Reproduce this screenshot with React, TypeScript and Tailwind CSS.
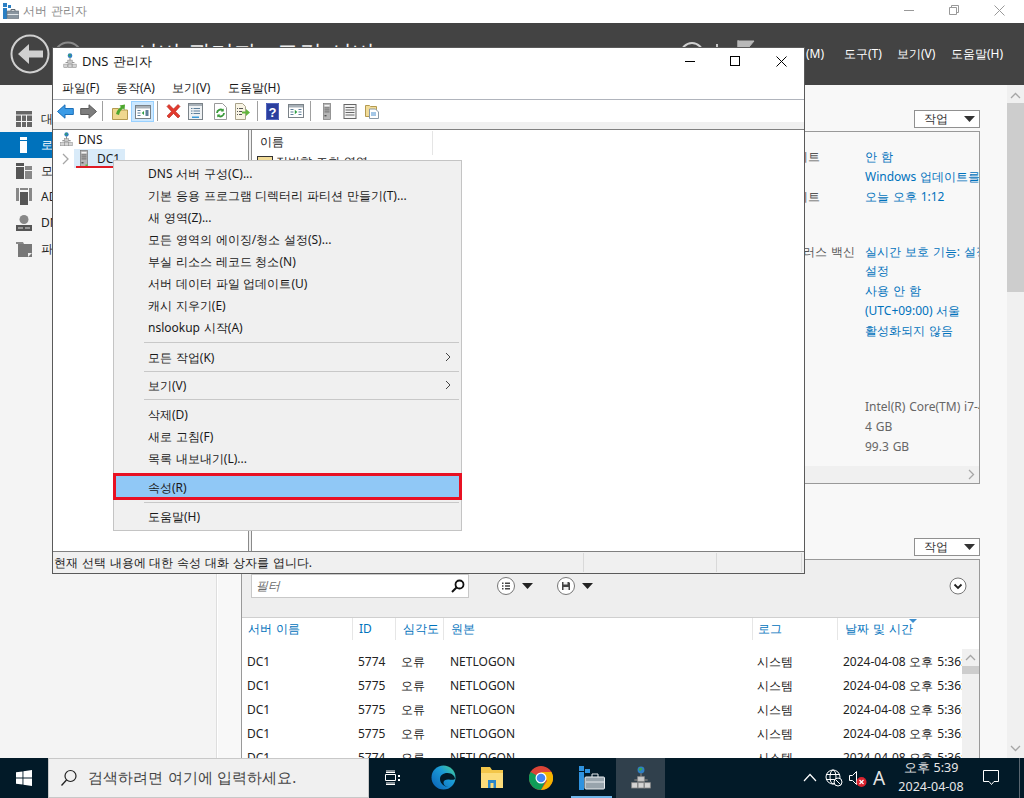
import React from "react";

const DnsIcon = ({ size = 16, className = "" }: { size?: number; className?: string }) => (
  <svg width={size} height={size} viewBox="0 0 16 18" className={className}>
    <circle cx="8" cy="3" r="2.6" fill="#2f7fc4" />
    <path d="M6.2 2.2c1-1.2 2.4-1 3 0-.6 1-1.4.6-1.6 1.6-.6.2-1.2-.6-1.4-1.6z" fill="#3aa655" />
    <path d="M7.5 5.5h1v3h-1zM3 10h10v1H3z" fill="#777" />
    <rect x="5.5" y="8" width="5" height="3.5" fill="#c9c9c9" stroke="#8a8a8a" strokeWidth=".6" />
    <rect x="1" y="12.5" width="4.4" height="4" fill="#d4d4d4" stroke="#8a8a8a" strokeWidth=".6" />
    <rect x="5.8" y="12.5" width="4.4" height="4" fill="#d4d4d4" stroke="#8a8a8a" strokeWidth=".6" />
    <rect x="10.6" y="12.5" width="4.4" height="4" fill="#d4d4d4" stroke="#8a8a8a" strokeWidth=".6" />
  </svg>
);

const ServerIcon = ({ dot = false }: { dot?: boolean }) => (
  <svg width="8" height="17" viewBox="0 0 8 17">
    <rect x=".5" y=".5" width="7" height="16" fill="#b5b5b5" stroke="#777" strokeWidth=".7" />
    <rect x="1.500" y="2" width="5" height="1.400" fill="#f2f2f2" />
    <rect x="1.500" y="4.400" width="5" height="1" fill="#6e6e6e" />
    <rect x="1.500" y="6.400" width="5" height="1" fill="#6e6e6e" />
    <rect x="1.500" y="8.400" width="5" height="1" fill="#6e6e6e" />
    <rect x="1.500" y="12" width="2" height="1.400" fill="#555" />
    {dot && <rect x="5.500" y="14.500" width="2" height="2" fill="#56c13a" />}
  </svg>
);

const WinPanel = ({ children }: { children: React.ReactNode }) => (
  <svg width="16" height="14" viewBox="0 0 16 14">
    <rect x=".5" y=".5" width="15" height="13" fill="#fff" stroke="#7a8288" />
    <rect x="1" y="1" width="14" height="2.5" fill="#a7b0b7" />
    {children}
  </svg>
);

const Toolbar = () => (
  <div className="absolute left-0 top-[53px] w-full h-[22px]">
    <svg className="absolute left-[5px] top-[4px]" width="17" height="15" viewBox="0 0 17 15">
      <path d="M0.5 7.5 8 .8v3.7h8.3v6H8v3.7z" fill="#3b9be6" stroke="#1c6fb8" />
    </svg>
    <svg className="absolute left-[28px] top-[4px]" width="17" height="15" viewBox="0 0 17 15">
      <path d="M16.5 7.5 9 .8v3.700H.7v6H9v3.700z" fill="#7d7d7d" stroke="#5c5c5c" />
    </svg>
    <div className="absolute left-[50px] top-[1px] w-px h-[20px] bg-[#a0a0a0]" />
    <svg className="absolute left-[60px] top-[3px]" width="16" height="17" viewBox="0 0 16 17">
      <path d="M.5 5.500h6l1 1.500h8v9.500H.5z" fill="#efd78e" stroke="#b49a50" />
      <path d="M4 11 C5 7 7 5 9 4 L7.500 2.500 13 1.500 12.500 7 11 5.500C9 7 7.500 9 7 12z" fill="#4ea72e" />
    </svg>
    <div className="absolute left-[79px] top-[1px] w-[23px] h-[21px] bg-[#cce8ff] border border-[#99d1ff] flex items-center justify-center">
      <WinPanel>
        <path d="M2.500 5h3v1h-3zM2.500 7.500h3v1h-3zM2.500 10h3v1h-3zM10.500 5h3v6h-3z" fill="#5e7f9a" />
        <path d="M9 6v4L6.700 8z" fill="#2f9e44" />
      </WinPanel>
    </div>
    <div className="absolute left-[105px] top-[1px] w-px h-[20px] bg-[#a0a0a0]" />
    <svg className="absolute left-[113px] top-[3px]" width="17" height="17" viewBox="0 0 17 17">
      <path d="M2 3.500 4 1.500l4.500 4.500 4.500-4.500 2 2-4.500 4.900 4.500 4.600-2 2-4.500-4.600-4.500 4.600-2-2L6.500 8.400z" fill="#e23a2e" stroke="#b32318" strokeWidth=".6" />
    </svg>
    <svg className="absolute left-[136px] top-[3px]" width="15" height="17" viewBox="0 0 15 17">
      <rect x=".5" y=".5" width="14" height="16" fill="#eef1f3" stroke="#7a8288" />
      <rect x="1" y="1" width="13" height="2" fill="#a7b0b7" />
      <path d="M3 5h1.500v1H3zM5.500 5H12v1H5.500zM3 7.500h1.500v1H3zM5.500 7.500H12v1H5.500zM3 10h1.500v1H3zM5.500 10H12v1H5.500z" fill="#5e7f9a" />
      <rect x="4" y="13.500" width="7" height="1.500" fill="#3a9ad9" />
    </svg>
    <svg className="absolute left-[161px] top-[3px]" width="15" height="17" viewBox="0 0 15 17">
      <path d="M1.500.5h8l4 4v12h-12z" fill="#fff" stroke="#9a9a9a" />
      <path d="M4 10a3.500 3.500 0 0 1 6-2.400M11 10a3.500 3.500 0 0 1-6 2.400" fill="none" stroke="#3a9a3a" strokeWidth="1.800" />
      <path d="M10.700 5.500v3h-3zM4.300 14.500v-3h3z" fill="#3a9a3a" />
    </svg>
    <svg className="absolute left-[182px] top-[3px]" width="16" height="17" viewBox="0 0 16 17">
      <path d="M1.500.5h7l3 3v13h-10z" fill="#f8f4e4" stroke="#a8a28a" />
      <path d="M3 5h1v1H3zM5 5h4v1H5zM3 8h1v1H3zM5 8h3v1H5zM3 11h1v1H3zM5 11h3v1H5z" fill="#555" />
      <path d="M8 8.500h4V6l4 3.500-4 3.500v-2.500H8z" fill="#62b53c" />
    </svg>
    <div className="absolute left-[205px] top-[1px] w-px h-[20px] bg-[#a0a0a0]" />
    <svg className="absolute left-[214px] top-[3px]" width="13" height="17" viewBox="0 0 13 17">
      <rect width="13" height="17" fill="#2b3f9e" />
      <rect x=".7" y=".7" width="11.600" height="15.600" fill="none" stroke="#6f82d6" strokeWidth=".6" />
      <text x="6.500" y="13.500" textAnchor="middle" fill="#fff" fontSize="13" fontWeight="700" fontFamily="'Liberation Sans',sans-serif">?</text>
    </svg>
    <div className="absolute left-[236px] top-[4px]">
      <WinPanel>
        <path d="M2.500 5h3v1h-3zM2.500 7.500h3v1h-3zM2.500 10h3v1h-3zM10.500 5h3v1h-3zM10.500 7.500h3v1h-3zM10.500 10h3v1h-3z" fill="#5e7f9a" />
        <path d="M6.800 5.800v4.400L9.300 8z" fill="#2f9e44" />
      </WinPanel>
    </div>
    <div className="absolute left-[258px] top-[1px] w-px h-[20px] bg-[#a0a0a0]" />
    <div className="absolute left-[271px] top-[3px]"><ServerIcon /></div>
    <svg className="absolute left-[291px] top-[4px]" width="14" height="15" viewBox="0 0 14 15">
      <rect x="1" y=".5" width="12" height="14" fill="#f4f4f4" stroke="#666" />
      <path d="M2.500 3h9v1h-9zM2.500 5.500h9v1h-9zM2.500 8h9v1h-9zM2.500 10.500h9v1h-9z" fill="#666" />
    </svg>
    <svg className="absolute left-[313px] top-[3px]" width="15" height="16" viewBox="0 0 15 16">
      <path d="M.5 2.500h4l1 1h6v10H.5z" fill="#f2dc98" stroke="#b49a50" />
      <path d="M4.500 6h6l3 3v6.500h-9z" fill="#fff" stroke="#8a9aa8" />
      <path d="M6 9.500h5v1H6zM6 11.500h5v1H6z" fill="#4a90d0" />
    </svg>
  </div>
);

const menuTop = [
  "DNS 서버 구성(C)...",
  "기본 응용 프로그램 디렉터리 파티션 만들기(T)...",
  "새 영역(Z)...",
  "모든 영역의 에이징/청소 설정(S)...",
  "부실 리소스 레코드 청소(N)",
  "서버 데이터 파일 업데이트(U)",
  "캐시 지우기(E)",
  "nslookup 시작(A)",
];

const MenuItem = ({ label, arrow }: { label: string; arrow?: boolean }) => (
  <div className="relative h-[22px] leading-[24px] pl-[34px] whitespace-nowrap">
    {label}
    {arrow && (
      <svg className="absolute right-[9px] top-[6px]" width="8" height="10" viewBox="0 0 8 10">
        <path d="M2 1l4 4-4 4" fill="none" stroke="#444" strokeWidth="1" />
      </svg>
    )}
  </div>
);

const Sep = ({ h, mt }: { h: string; mt: string }) => (
  <div className={h + " relative"}>
    <div className={mt + " absolute left-[30px] right-[2px] h-px bg-[#c8c8c8]"} />
  </div>
);

const ContextMenu = () => (
  <div className="absolute left-[61px] top-[113px] w-[349px] h-[371px] bg-[#f0f0f0] border border-[#c4c4c4] pt-[1px] text-[12px] text-[#1a1a1a]">
    {menuTop.map((m) => (
      <MenuItem key={m} label={m} />
    ))}
    <Sep h="h-[8px]" mt="top-[4px]" />
    <MenuItem label="모든 작업(K)" arrow />
    <Sep h="h-[6px]" mt="top-[3px]" />
    <MenuItem label="보기(V)" arrow />
    <Sep h="h-[7px]" mt="top-[3px]" />
    <MenuItem label="삭제(D)" />
    <MenuItem label="새로 고침(F)" />
    <MenuItem label="목록 내보내기(L)..." />
    <div className="h-[4px]" />
    <div className="relative -mx-px h-[27px] bg-[#90c8f6] border-[3px] border-[#e81123] leading-[24px] pl-[32px]">
      속성(R)
    </div>
    <Sep h="h-[5px]" mt="top-[2px]" />
    <MenuItem label="도움말(H)" />
  </div>
);

const DnsWindow = () => (
  <div className="absolute left-[52px] top-[47px] w-[753px] h-[527px] bg-white text-[12px] text-[#1a1a1a]">
    <div className="absolute left-[10px] top-[6px]"><DnsIcon /></div>
    <div className="absolute left-[30px] top-[5px] text-[13px] leading-[18px]">DNS 관리자</div>
    <svg className="absolute left-[633px] top-[9px]" width="10" height="10" viewBox="0 0 10 10"><path d="M0 5.500h10" stroke="#000" /></svg>
    <svg className="absolute left-[678px] top-[9px]" width="10" height="10" viewBox="0 0 10 10"><rect x=".5" y=".5" width="9" height="9" fill="none" stroke="#000" /></svg>
    <svg className="absolute left-[724px] top-[9px]" width="11" height="11" viewBox="0 0 11 11"><path d="M.5.500l10 10M10.500.500l-10 10" stroke="#000" /></svg>
    <div className="absolute left-[10px] top-[32px] leading-[18px]">파일(F)</div>
    <div className="absolute left-[64px] top-[32px] leading-[18px]">동작(A)</div>
    <div className="absolute left-[120px] top-[32px] leading-[18px]">보기(V)</div>
    <div className="absolute left-[176px] top-[32px] leading-[18px]">도움말(H)</div>
    <div className="absolute left-0 top-[52px] w-full h-px bg-[#b0b4bc]" />
    <Toolbar />
    <div className="absolute left-0 top-[75px] w-full h-[7px] bg-[#f0f0f0]" />
    <div className="absolute left-0 top-[82px] w-full h-px bg-[#808080]" />
    <div className="absolute left-0 top-[83px] w-[196px] h-[421px] bg-white">
      <div className="absolute left-[7px] top-[2px]"><DnsIcon size={15} /></div>
      <div className="absolute left-[26px] top-[1px] leading-[18px]">DNS</div>
      <svg className="absolute left-[9px] top-[23px]" width="8" height="12" viewBox="0 0 8 12"><path d="M2 1l5 5-5 5" fill="none" stroke="#a6a6a6" strokeWidth="1.300" /></svg>
      <div className="absolute left-[22px] top-[19px] w-[51px] h-[19px] bg-[#d9ebf9]" />
      <div className="absolute left-[28px] top-[20px]"><ServerIcon dot /></div>
      <div className="absolute left-[45px] top-[20px] leading-[18px]">DC1</div>
      <div className="absolute left-[24px] top-[36px] w-[48px] h-[2px] bg-[#e01b24]" />
    </div>
    <div className="absolute left-[196px] top-[83px] w-[4px] h-[421px] bg-[#f0f0f0] border-x border-[#8a8a8a]" />
    <div className="absolute left-[200px] top-[83px] right-0 h-[421px] bg-white">
      <div className="absolute left-[8px] top-[3px] leading-[18px]">이름</div>
      <div className="absolute left-[180px] top-[1px] w-px h-[24px] bg-[#e5e5e5]" />
      <svg className="absolute left-[5px] top-[26px]" width="16" height="14" viewBox="0 0 16 14">
        <rect x=".5" y=".5" width="15" height="13" fill="#f2dc98" stroke="#333" />
      </svg>
      <div className="absolute left-[24px] top-[23px] leading-[18px]">정방향 조회 영역</div>
    </div>
    <div className="absolute left-0 top-[504px] w-full h-[22px] bg-[#f0f0f0] border-t border-[#808080] leading-[21px] pl-[2px]">
      현재 선택 내용에 대한 속성 대화 상자를 엽니다.
      <div className="absolute left-[531px] top-[1px] w-px h-[19px] bg-[#d9d9d9]" />
      <div className="absolute left-[664px] top-[1px] w-px h-[19px] bg-[#d9d9d9]" />
      <div className="absolute left-[749px] top-[1px] w-px h-[19px] bg-[#d9d9d9]" />
    </div>
    <div className="absolute inset-0 border border-[#5a5a5a] pointer-events-none" />
    <ContextMenu />
  </div>
);

const rows = [["5774"], ["5775"], ["5775"], ["5775"], ["5774"]];

const DropButton = ({ top }: { top: string }) => (
  <div className={top + " absolute left-[914px] w-[66px] h-[18px] bg-white border border-[#909090] text-[12px] text-[#333] leading-[16px] pl-[9px]"}>
    작업
    <svg className="absolute left-[49px] top-[5px]" width="11" height="6" viewBox="0 0 11 6"><path d="M0 0h11L5.500 6z" fill="#333" /></svg>
  </div>
);

const Background = () => (
  <>
    <div className="absolute left-0 top-0 w-full h-[23px] bg-white">
      <svg className="absolute left-[3px] top-[3px]" width="16" height="16" viewBox="0 0 16 16">
        <path d="M0 0h4v4H0zM0 5h4v11H0zM5 2h3v3H5z" fill="#2a7fc4" />
        <rect x="4" y="8" width="12" height="7.500" rx=".5" fill="#8a96a0" stroke="#5f6a73" strokeWidth=".6" />
        <path d="M8 8V6.500h4V8" fill="none" stroke="#5f6a73" />
        <path d="M4.500 11.500h11" stroke="#e4e8eb" />
      </svg>
      <div className="absolute left-[23px] top-[2px] text-[12px] leading-[18px] text-[#8a8a8a]">서버 관리자</div>
      <svg className="absolute left-[904px] top-[10px]" width="10" height="2" viewBox="0 0 10 2"><path d="M0 .5h10" stroke="#999" /></svg>
      <svg className="absolute left-[949px] top-[5px]" width="10" height="10" viewBox="0 0 10 10"><path d="M.5 2.500h7v7h-7zM2.500 2.500v-2h7v7h-2" fill="none" stroke="#999" /></svg>
      <svg className="absolute left-[994px] top-[5px]" width="11" height="11" viewBox="0 0 11 11"><path d="M.5.500l10 10M10.500.500l-10 10" stroke="#999" /></svg>
    </div>
    <div className="absolute left-0 top-[23px] w-full h-[62px] bg-[#434343] text-white">
      <svg className="absolute left-[10px] top-[11px]" width="40" height="40" viewBox="0 0 40 40">
        <circle cx="20" cy="20" r="18.500" fill="none" stroke="#d0d0d0" strokeWidth="2" />
        <path d="M8 20 19 10v6.500h14v7H19V30z" fill="#d0d0d0" />
      </svg>
      <svg className="absolute left-[53px] top-[18px]" width="30" height="30" viewBox="0 0 30 30">
        <circle cx="15" cy="15" r="13.500" fill="none" stroke="#8a8a8a" strokeWidth="2" />
      </svg>
      <div className="absolute left-[135px] top-[14px] text-[23px] leading-[30px] text-[#f0f0f0] whitespace-nowrap">서버 관리자 · 로컬 서버</div>
      <svg className="absolute left-[679px] top-[18px]" width="26" height="26" viewBox="0 0 26 26">
        <circle cx="13" cy="13" r="11" fill="none" stroke="#d0d0d0" strokeWidth="2" />
      </svg>
      <div className="absolute left-[716px] top-[21px] w-[2px] h-[4px] bg-[#c8c8c8]" />
      <svg className="absolute left-[737px] top-[17px]" width="18" height="20" viewBox="0 0 18 20">
        <path d="M1 0v20M1 1h16l-5 6 5 6H1z" fill="#b8b8b8" stroke="#b8b8b8" />
      </svg>
      <div className="absolute right-[200px] top-[22px] text-[12px] leading-[18px] whitespace-nowrap">관리(M)</div>
      <div className="absolute left-[844px] top-[22px] text-[12px] leading-[18px] whitespace-nowrap">도구(T)</div>
      <div className="absolute left-[897px] top-[22px] text-[12px] leading-[18px] whitespace-nowrap">보기(V)</div>
      <div className="absolute left-[951px] top-[22px] text-[12px] leading-[18px] whitespace-nowrap">도움말(H)</div>
    </div>
    <div className="absolute left-0 top-[85px] w-[217px] h-[673px] bg-[#f4f4f4] border-r border-[#dedede] text-[12px] text-[#222]">
      <svg className="absolute left-[16px] top-[26px]" width="16" height="16" viewBox="0 0 16 16">
        <path d="M0 0h16v3.500H0zM0 4.500h5V10H0zM6 4.500h4V10H6zM11 4.500h5V10h-5zM0 11h5v5H0zM6 11h4v5H6zM11 11h5v5h-5z" fill="#666" />
      </svg>
      <div className="absolute left-[41px] top-[25px] leading-[18px]">대시보드</div>
      <div className="absolute left-0 top-[47px] w-full h-[26px] bg-[#0072bc]" />
      <svg className="absolute left-[20px] top-[52px]" width="7" height="16" viewBox="0 0 7 16">
        <path d="M0 0h7v3H0zM0 4h7v12H0z" fill="#fff" />
      </svg>
      <div className="absolute left-[41px] top-[51px] leading-[18px] text-white">로컬 서버</div>
      <svg className="absolute left-[16px] top-[78px]" width="16" height="16" viewBox="0 0 16 16">
        <path d="M0 0h8v3H0zM0 4h8v12H0z" fill="#555" />
        <path d="M9 3h7v4H9zM9 8h7v8H9z" fill="#888" />
      </svg>
      <div className="absolute left-[41px] top-[77px] leading-[18px]">모든 서버</div>
      <svg className="absolute left-[16px] top-[103px]" width="16" height="17" viewBox="0 0 16 17">
        <path d="M0 0h3v13H0zM13 0h3v13h-3zM4 0h8v2H4z" fill="#888" />
        <path d="M4 4h8v13H4z" fill="#555" />
      </svg>
      <div className="absolute left-[41px] top-[103px] leading-[18px]">AD DS</div>
      <svg className="absolute left-[16px] top-[130px]" width="16" height="16" viewBox="0 0 16 16">
        <circle cx="8" cy="4.500" r="4.500" fill="#888" />
        <path d="M0 10h16v6H0z" fill="#555" />
        <path d="M2 12.500h5v1H2zM9 12.500h5v1H9z" fill="#ddd" />
      </svg>
      <div className="absolute left-[41px] top-[129px] leading-[18px]">DNS</div>
      <svg className="absolute left-[16px] top-[156px]" width="16" height="16" viewBox="0 0 16 16">
        <path d="M0 1h7l1 2H0z" fill="#888" />
        <path d="M2 3h14v13H2z" fill="#777" />
        <path d="M12 12h4l-4 4z" fill="#eee" />
      </svg>
      <div className="absolute left-[41px] top-[155px] leading-[18px]">파일 및 저장소 서비스</div>
    </div>
    <div className="absolute left-[218px] top-[85px] w-[789px] h-[673px] bg-[#f8f8f8]" />
    <div className="absolute left-[1007px] top-[85px] w-[17px] h-[673px] bg-[#f0f0f0]">
      <svg className="absolute left-[3px] top-[7px]" width="11" height="7" viewBox="0 0 11 7"><path d="M1 6l4.500-4.500L10 6" fill="none" stroke="#a6a6a6" strokeWidth="1.300" /></svg>
      <div className="absolute left-0 top-[18px] w-full h-[189px] bg-[#cdcdcd]" />
      <svg className="absolute left-[3px] top-[660px]" width="11" height="7" viewBox="0 0 11 7"><path d="M1 1l4.500 4.500L10 1" fill="none" stroke="#a6a6a6" strokeWidth="1.300" /></svg>
    </div>
    <DropButton top="top-[110px]" />
    <div className="absolute left-[241px] top-[131px] w-[739px] h-[353px] bg-[#f8f8f8] border border-[#999] text-[12px] overflow-hidden">
      <div className="absolute right-[159px] top-[16px] leading-[18px] text-[#555]">업데이트</div>
      <div className="absolute right-[159px] top-[56px] leading-[18px] text-[#555]">업데이트</div>
      <div className="absolute right-[124px] top-[111px] leading-[18px] text-[#555]">바이러스 백신</div>
      <div className="absolute left-[623px] top-[16px] leading-[18px] text-[#0072bc]">안 함</div>
      <div className="absolute left-[623px] top-[36px] leading-[18px] text-[#0072bc] whitespace-nowrap">Windows 업데이트를</div>
      <div className="absolute left-[623px] top-[56px] leading-[18px] text-[#0072bc]">오늘 오후 1:12</div>
      <div className="absolute left-[623px] top-[111px] leading-[18px] text-[#0072bc] whitespace-nowrap">실시간 보호 기능: 설정</div>
      <div className="absolute left-[623px] top-[130px] leading-[18px] text-[#0072bc]">설정</div>
      <div className="absolute left-[623px] top-[150px] leading-[18px] text-[#0072bc]">사용 안 함</div>
      <div className="absolute left-[623px] top-[170px] leading-[18px] text-[#0072bc]">(UTC+09:00) 서울</div>
      <div className="absolute left-[623px] top-[190px] leading-[18px] text-[#0072bc]">활성화되지 않음</div>
      <div className="absolute left-[623px] top-[266px] leading-[18px] text-[#666] whitespace-nowrap">Intel(R) Core(TM) i7-4770</div>
      <div className="absolute left-[623px] top-[286px] leading-[18px] text-[#666]">4 GB</div>
      <div className="absolute left-[623px] top-[306px] leading-[18px] text-[#666]">99.3 GB</div>
      <div className="absolute left-0 bottom-0 w-full h-[17px] bg-[#f0f0f0]">
        <svg className="absolute right-[4px] top-[3px]" width="7" height="11" viewBox="0 0 7 11"><path d="M1 1l4.500 4.500L1 10" fill="none" stroke="#a6a6a6" strokeWidth="1.300" /></svg>
      </div>
    </div>
    <DropButton top="top-[538px]" />
    <div className="absolute left-[241px] top-[559px] w-[739px] h-[205px] bg-white border border-[#999] text-[12px] overflow-hidden">
      <div className="absolute left-0 top-0 w-full h-[58px] bg-[#eeeeee] border-b border-[#cfcfcf]" />
      <div className="absolute left-[9px] top-[14px] w-[218px] h-[24px] bg-white border border-[#c8c8c8] pl-[4px] leading-[22px] italic text-[#6a6a6a]">
        필터
        <svg className="absolute left-[199px] top-[4px]" width="14" height="14" viewBox="0 0 14 14">
          <circle cx="8.500" cy="5.500" r="4" fill="none" stroke="#111" strokeWidth="1.800" />
          <path d="M5.500 8.500 1 13" stroke="#111" strokeWidth="2" />
        </svg>
      </div>
      <svg className="absolute left-[255px] top-[17px]" width="18" height="18" viewBox="0 0 18 18">
        <circle cx="9" cy="9" r="8.500" fill="#fff" stroke="#777" />
        <path d="M5 5.500h1.500V7H5zM8 5.500h5V7H8zM5 8.300h1.500v1.500H5zM8 8.300h5v1.500H8zM5 11h1.500v1.500H5zM8 11h5v1.500H8z" fill="#444" />
      </svg>
      <svg className="absolute left-[280px] top-[23px]" width="11" height="6" viewBox="0 0 11 6"><path d="M0 0h11L5.500 6z" fill="#222" /></svg>
      <svg className="absolute left-[315px] top-[17px]" width="18" height="18" viewBox="0 0 18 18">
        <circle cx="9" cy="9" r="8.500" fill="#fff" stroke="#777" />
        <path d="M5 5h7l1 1v7H5z" fill="#444" />
        <path d="M6.500 5h4v2.500h-4zM6.500 10h5v3h-5z" fill="#eee" />
      </svg>
      <svg className="absolute left-[340px] top-[23px]" width="11" height="6" viewBox="0 0 11 6"><path d="M0 0h11L5.500 6z" fill="#222" /></svg>
      <svg className="absolute left-[707px] top-[17px]" width="18" height="18" viewBox="0 0 18 18">
        <circle cx="9" cy="9" r="8" fill="#fff" stroke="#777" />
        <path d="M5.500 7.500 9 11l3.500-3.500" fill="none" stroke="#222" strokeWidth="1.800" />
      </svg>

      <div className="absolute left-[6px] top-[60px] leading-[18px] text-[#0072bc]">서버 이름</div>
      <div className="absolute left-[117px] top-[60px] leading-[18px] text-[#0072bc]">ID</div>
      <div className="absolute left-[161px] top-[60px] leading-[18px] text-[#0072bc]">심각도</div>
      <div className="absolute left-[209px] top-[60px] leading-[18px] text-[#0072bc]">원본</div>
      <div className="absolute left-[516px] top-[60px] leading-[18px] text-[#0072bc]">로그</div>
      <div className="absolute left-[603px] top-[60px] leading-[18px] text-[#0072bc]">날짜 및 시간</div>
      <svg className="absolute left-[667px] top-[59px]" width="8" height="4" viewBox="0 0 8 4"><path d="M0 0h8L4 4z" fill="#3d8fcf" /></svg>
      <div className="absolute left-[110px] top-[58px] w-px h-[22px] bg-[#e6e6e6]" />
      <div className="absolute left-[153px] top-[58px] w-px h-[22px] bg-[#e6e6e6]" />
      <div className="absolute left-[201px] top-[58px] w-px h-[22px] bg-[#e6e6e6]" />
      <div className="absolute left-[510px] top-[58px] w-px h-[22px] bg-[#e6e6e6]" />
      <div className="absolute left-[595px] top-[58px] w-px h-[22px] bg-[#e6e6e6]" />

      <div className="absolute left-0 top-[93px] w-[720px] overflow-hidden text-[#222]">
        {rows.map((r, i) => (
          <div key={i} className="relative h-[24px] leading-[18px] whitespace-nowrap">
            <span className="absolute left-[5px] top-0">DC1</span>
            <span className="absolute left-[116px] top-0">{r[0]}</span>
            <span className="absolute left-[159px] top-0">오류</span>
            <span className="absolute left-[208px] top-0">NETLOGON</span>
            <span className="absolute left-[515px] top-0">시스템</span>
            <span className="absolute left-[601px] top-0">2024-04-08 오후 5:36:12</span>
          </div>
        ))}
      </div>
      <div className="absolute left-[720px] top-[89px] w-[17px] h-[120px] bg-[#f0f0f0]">
        <svg className="absolute left-[3px] top-[5px]" width="11" height="7" viewBox="0 0 11 7"><path d="M1 6l4.500-4.500L10 6" fill="none" stroke="#a6a6a6" strokeWidth="1.300" /></svg>
        <div className="absolute left-0 top-[17px] w-full h-[8px] bg-[#cdcdcd]" />
      </div>
    </div>
  </>
);

const Taskbar = () => (
  <div className="absolute left-0 top-[758px] w-full h-[40px] bg-[#021a28] text-white">
    <svg className="absolute left-[16px] top-[12px]" width="16" height="16" viewBox="0 0 16 16">
      <path d="M0 2.300 6.500 1.400v6.200H0zM7.400 1.300 16 0v7.600H7.400zM0 8.400h6.500v6.200L0 13.700zM7.400 8.400H16V16l-8.600-1.300z" fill="#fff" />
    </svg>
    <div className="absolute left-[48px] top-0 w-[321px] h-[40px] bg-[#f0f0f0] border border-[#c8c8c8]">
      <svg className="absolute left-[11px] top-[10px]" width="18" height="18" viewBox="0 0 18 18">
        <circle cx="10.500" cy="7" r="5.500" fill="none" stroke="#222" strokeWidth="1.200" />
        <path d="M6.500 11 1.500 16.500" stroke="#222" strokeWidth="1.300" />
      </svg>
      <div className="absolute left-[39px] top-[8px] text-[15px] leading-[20px] text-[#444] whitespace-nowrap">검색하려면 여기에 입력하세요.</div>
    </div>
    <svg className="absolute left-[385px] top-[12px]" width="16" height="15" viewBox="0 0 16 15">
      <path d="M.5 4.500h10v6H.5z" fill="none" stroke="#fff" />
      <path d="M1 1h9M1 2.500h9M1 13h9M1 14.500h9" stroke="#fff" />
      <path d="M13 5h2v2h-2zM13 9h2v2h-2z" fill="#fff" />
    </svg>
    <svg className="absolute left-[431px] top-[7px]" width="25" height="25" viewBox="0 0 25 25">
      <defs>
        <linearGradient id="edgeA" x1="0" y1="1" x2="1" y2="0">
          <stop offset="0" stopColor="#0a5fb4" />
          <stop offset=".6" stopColor="#1a9ad6" />
          <stop offset="1" stopColor="#4fd58a" />
        </linearGradient>
      </defs>
      <circle cx="12.500" cy="12.500" r="12" fill="url(#edgeA)" />
      <path d="M24 14c0-3-3-6-7.500-6C12 8 9 10.500 9 14c0 5 5 8.500 10.500 8-4 .5-7-1.500-7-4.500 0-2 2-3 4.500-3 3 0 4 1 7-.5z" fill="#021a28" />
    </svg>
    <svg className="absolute left-[481px] top-[9px]" width="22" height="21" viewBox="0 0 22 21">
      <path d="M0 0h9l2 3h11v18H0z" fill="#f3c64a" />
      <path d="M0 6h22v15H0z" fill="#fcdc7a" />
      <rect x="7" y="13" width="8" height="8" fill="#2b87c9" />
      <rect x="9.500" y="16" width="3" height="5" fill="#fcdc7a" />
    </svg>
    <svg className="absolute left-[529px] top-[8px]" width="24" height="24" viewBox="0 0 24 24">
      <circle cx="12" cy="12" r="12" fill="#db4437" />
      <path d="M12 12 1.600 6A12 12 0 0 0 12 24l6-12z" fill="#0f9d58" />
      <path d="M12 6h10.400A12 12 0 0 1 12 24l6-9z" fill="#f4b400" />
      <circle cx="12" cy="12" r="5.500" fill="#fff" />
      <circle cx="12" cy="12" r="4.300" fill="#4285f4" />
    </svg>
    <svg className="absolute left-[579px] top-[8px]" width="26" height="24" viewBox="0 0 26 24">
      <path d="M0 0h5v5H0zM0 6h5v18H0zM6 3h5v4H6z" fill="#2f93e0" />
      <rect x="6" y="11" width="19.500" height="12" rx="1" fill="#98a4ac" stroke="#e8ecef" />
      <path d="M13 11V8h6v3" fill="none" stroke="#e8ecef" />
      <path d="M7 16h18" stroke="#e8ecef" />
    </svg>
    <div className="absolute left-[571px] top-[38px] w-[41px] h-[2px] bg-[#6fb6ea]" />
    <div className="absolute left-[616px] top-0 w-[49px] h-[40px] bg-[#30404c]" />
    <div className="absolute left-[629px] top-[8px]"><DnsIcon size={24} /></div>

    <svg className="absolute left-[803px] top-[15px]" width="14" height="9" viewBox="0 0 14 9"><path d="M1 8l6-6.500L13 8" fill="none" stroke="#fff" strokeWidth="1.200" /></svg>
    <svg className="absolute left-[825px] top-[11px]" width="18" height="18" viewBox="0 0 18 18">
      <circle cx="8" cy="8" r="7" fill="none" stroke="#fff" />
      <ellipse cx="8" cy="8" rx="3" ry="7" fill="none" stroke="#fff" />
      <path d="M1 5.500h14M1 10.500h14" stroke="#fff" />
      <circle cx="13" cy="13" r="4" fill="#021a28" stroke="#fff" />
      <path d="M10.500 10.500l5 5" stroke="#fff" />
    </svg>
    <svg className="absolute left-[849px] top-[11px]" width="18" height="20" viewBox="0 0 18 20">
      <path d="M.5 6.500h3l4-4v13l-4-4h-3z" fill="none" stroke="#fff" />
      <circle cx="12.500" cy="13" r="5" fill="#d9232e" />
      <path d="M10.500 11l4 4M14.500 11l-4 4" stroke="#fff" strokeWidth="1.200" />
    </svg>
    <div className="absolute left-[873px] top-[8px] text-[19px] leading-[24px] text-[#e4e4e4]">A</div>
    <div className="absolute left-[890px] top-0 w-[82px] text-[12.5px] leading-[19px] text-center text-[#e8e8e8] whitespace-nowrap">
      <div>오후 5:39</div>
      <div>2024-04-08</div>
    </div>
    <svg className="absolute left-[983px] top-[12px]" width="16" height="16" viewBox="0 0 16 16">
      <path d="M.5.500h15v11h-4.500L8.500 14.500 6 11.500H.5z" fill="none" stroke="#fff" />
    </svg>
    <div className="absolute left-[1019px] top-0 w-px h-[40px] bg-[#5a6670]" />
  </div>
);

export default function App() {
  return (
    <div className="relative w-[1024px] h-[798px] overflow-hidden bg-white [word-spacing:0.7px] [font-family:'Noto_Sans','Noto_Sans_CJK_KR',sans-serif]">
      <Background />
      <DnsWindow />
      <Taskbar />
    </div>
  );
}
